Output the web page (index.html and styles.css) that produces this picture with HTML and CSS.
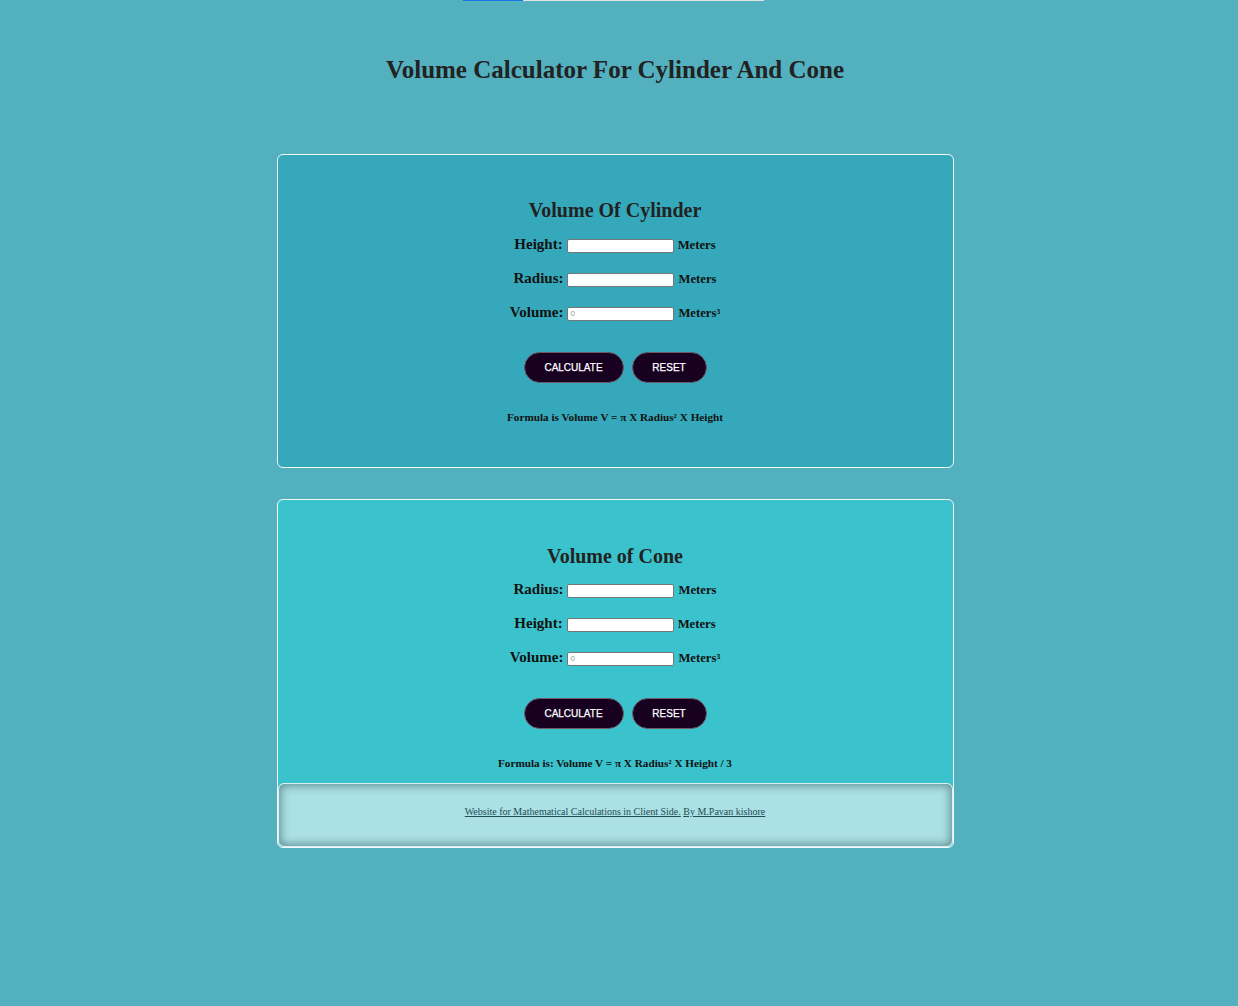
FILE: index.html
```html
<!DOCTYPE html>
<html>
<head>
<meta charset="utf-8">
<title>Volume Calculator</title>
<link rel="stylesheet" href="styles.css">
</head>
<body>
<div class="topbar"><div class="topbar-fill"></div></div>
<h1 class="title">Volume Calculator For Cylinder And Cone</h1>
<main class="wrap">
  <section class="card card-cyl">
    <h2 class="card-title">Volume Of Cylinder</h2>
    <div class="row"><span class="lbl">Height:</span> <input class="field" type="text"> <span class="unit">Meters</span></div>
    <div class="row"><span class="lbl">Radius:</span> <input class="field" type="text"> <span class="unit">Meters</span></div>
    <div class="row"><span class="lbl">Volume:</span> <input class="field" type="text" placeholder="0"> <span class="unit">Meters³</span></div>
    <div class="btns"><button class="btn btn-calc">CALCULATE</button><button class="btn btn-reset">RESET</button></div>
    <p class="formula">Formula is Volume V = π X Radius² X Height</p>
  </section>
  <section class="card card-cone">
    <h2 class="card-title card-title-cone">Volume of Cone</h2>
    <div class="row"><span class="lbl">Radius:</span> <input class="field" type="text"> <span class="unit">Meters</span></div>
    <div class="row"><span class="lbl">Height:</span> <input class="field" type="text"> <span class="unit">Meters</span></div>
    <div class="row"><span class="lbl">Volume:</span> <input class="field" type="text" placeholder="0"> <span class="unit">Meters³</span></div>
    <div class="btns btns-cone"><button class="btn btn-calc">CALCULATE</button><button class="btn btn-reset">RESET</button></div>
    <p class="formula formula-cone">Formula is: Volume V = π X Radius² X Height / 3</p>
    <footer class="foot"><a href="#">Website for Mathematical Calculations in Client Side.</a> <a href="#">By M.Pavan kishore</a></footer>
  </section>
</main>
</body>
</html>
```
FILE: styles.css
```css
html, body {
  margin: 0;
  padding: 0;
}
body {
  background: #52b0bf;
  font-family: "Liberation Serif", "Times New Roman", serif;
  color: #111;
  min-height: 1006px;
  padding-right: 8px;
}
.topbar {
  margin-left: 463px;
  width: 301px;
  height: 1px;
  background: #e2e2e2;
}
.topbar-fill {
  width: 60px;
  height: 1px;
  background: #1a73e8;
}
.title {
  margin: 0;
  padding-top: 54px;
  text-align: center;
  font-size: 25px;
  line-height: 30px;
  font-weight: bold;
  color: #222;
}
.wrap {
  width: 677px;
  margin: 69px auto 0;
  display: flex;
  flex-direction: column;
  gap: 31px;
}
.card {
  border: 1px solid #f2fbfc;
  border-radius: 6px;
  text-align: center;
  padding-top: 43px;
}
.card-cyl {
  background: #35a9bb;
  padding-bottom: 43px;
}
.card-cone {
  background: #3bc3cd;
  padding-top: 44px;
}
.card-title {
  margin: 0 0 5px;
  font-size: 20px;
  line-height: 24px;
  font-weight: bold;
  color: #222;
}
.card-title-cone {
  margin-bottom: 4px;
}
.row {
  height: 34px;
  line-height: 34px;
  white-space: nowrap;
}
.lbl {
  font-size: 15px;
  font-weight: bold;
  color: #111;
}
.unit {
  font-size: 12.7px;
  font-weight: bold;
  color: #111;
}
.field {
  width: 107px;
  height: 14px;
  box-sizing: border-box;
  border: 1px solid #767676;
  border-radius: 2px;
  background: #fff;
  padding: 0 2px;
  font-size: 8px;
  font-family: "Liberation Sans", Arial, sans-serif;
  vertical-align: 1px;
}
.field::placeholder {
  color: #999;
}
.btns {
  margin-top: 23px;
  display: flex;
  justify-content: center;
  gap: 8px;
}
.btns-cone {
  margin-top: 24px;
}
.btn {
  height: 31px;
  border: 1px solid #6e5a68;
  border-radius: 16px;
  background: #170020;
  color: #fff;
  font-family: "Liberation Sans", Arial, sans-serif;
  font-size: 10px;
  font-weight: normal;
  -webkit-text-stroke: 0.25px #fff;
  padding: 0;
}
.btn-calc { width: 100px; }
.btn-reset { width: 75px; }
.formula {
  margin: 27px 0 0;
  font-size: 11.2px;
  line-height: 14px;
  font-weight: bold;
  color: #111;
}
.formula-cone {
  margin-bottom: 13px;
}
.foot {
  height: 62px;
  line-height: 55px;
  border: 1px solid #d8f0f2;
  border-radius: 6px;
  background: #abe0e4;
  box-shadow: inset 0 0 8px 2px rgba(40, 80, 85, 0.55);
  font-size: 10px;
}
.foot a {
  color: #1e4f55;
  text-decoration: underline;
}
```
